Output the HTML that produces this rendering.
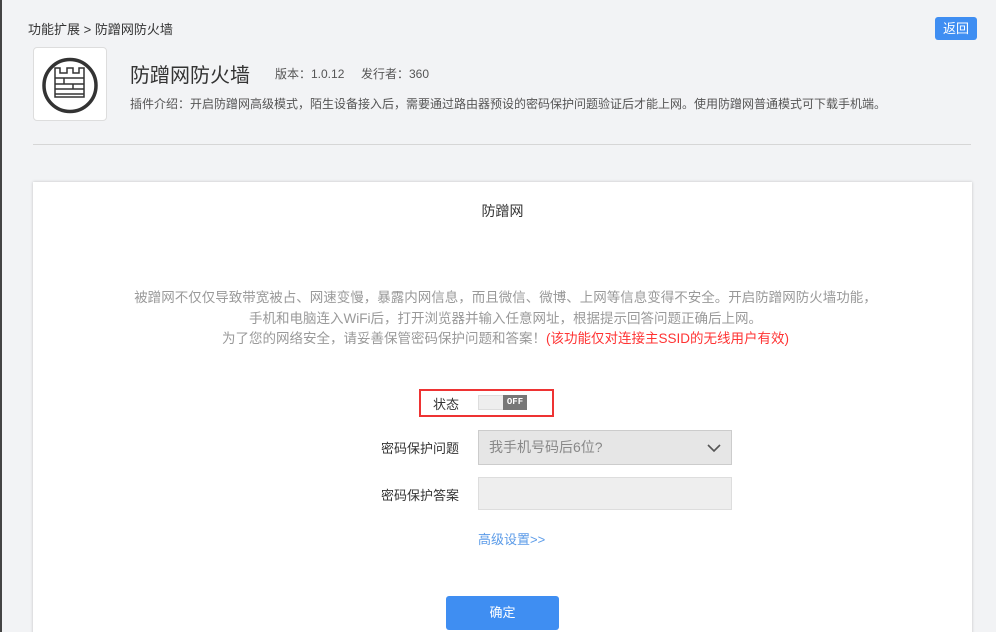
<!DOCTYPE html>
<html><head><meta charset="utf-8"><style>
*{margin:0;padding:0;box-sizing:border-box}
html,body{width:996px;height:632px;overflow:hidden}
body{background:#f2f3f5;font-family:"Liberation Sans","Noto Sans CJK SC",sans-serif;position:relative;color:#333}
.a{position:absolute;white-space:nowrap}
</style></head><body>
<div class="a" style="left:0;top:0;width:2px;height:632px;background:#444"></div>
<div class="a" style="left:28px;top:19px;font-size:13px;color:#333">功能扩展 &gt; 防蹭网防火墙</div>
<div class="a" style="left:935px;top:17px;width:42px;height:23px;background:#3f8ef2;border-radius:3px;color:#fff;font-size:13px;line-height:23px;text-align:center">返回</div>
<div class="a" style="left:33px;top:47px;width:74px;height:74px;background:#fff;border:1px solid #ddd;border-radius:4px">
<svg width="75" height="75" viewBox="0 0 75 75" style="position:absolute;left:-1px;top:-1px"><circle cx="37" cy="38.5" r="26" fill="none" stroke="#333" stroke-width="3.5"/>
<g fill="none" stroke="#333" stroke-width="1.5"><path d="M22 50V21h5v5h7v-5h6v5h6v-5h5v29z M22 31h29 M22 37h29 M22 42h29 M22 47h29 M31 31v6 M40 37v5"/></g></svg></div>
<div class="a" style="left:130px;top:59px;font-size:20px;color:#333">防蹭网防火墙</div>
<div class="a" style="left:275px;top:65px;font-size:12px;color:#555">版本：1.0.12</div>
<div class="a" style="left:361px;top:65px;font-size:12px;color:#555">发行者：360</div>
<div class="a" style="left:130px;top:95px;font-size:12px;color:#555">插件介绍：开启防蹭网高级模式，陌生设备接入后，需要通过路由器预设的密码保护问题验证后才能上网。使用防蹭网普通模式可下载手机端。</div>
<div class="a" style="left:33px;top:144px;width:938px;height:1px;background:#d6d6d6"></div>
<div class="a" style="left:33px;top:182px;width:939px;height:460px;background:#fff;box-shadow:0 0 3px rgba(0,0,0,.2)"></div>
<div class="a" style="left:33px;top:201px;width:939px;text-align:center;font-size:14px;color:#333">防蹭网</div>
<div class="a" style="left:36px;top:288px;width:939px;text-align:center;font-size:13.5px;line-height:20.5px;color:#999">被蹭网不仅仅导致带宽被占、网速变慢，暴露内网信息，而且微信、微博、上网等信息变得不安全。开启防蹭网防火墙功能，<br>手机和电脑连入WiFi后，打开浏览器并输入任意网址，根据提示回答问题正确后上网。<br>为了您的网络安全，请妥善保管密码保护问题和答案！<span style="color:#f33">(该功能仅对连接主SSID的无线用户有效)</span></div>
<div class="a" style="left:419px;top:389px;width:135px;height:28px;border:2px solid #e33"></div>
<div class="a" style="left:300px;top:394px;width:159px;text-align:right;font-size:13px">状态</div>
<div class="a" style="left:478px;top:395px;width:49px;height:15px;background:#eee;border:1px solid #ddd"></div>
<div class="a" style="left:503px;top:395px;width:24px;height:15px;background:#777;color:#fff;font-size:9px;font-family:'Liberation Mono',monospace;line-height:15px;text-align:center;font-weight:bold">OFF</div>
<div class="a" style="left:300px;top:438px;width:159px;text-align:right;font-size:13px">密码保护问题</div>
<div class="a" style="left:478px;top:430px;width:254px;height:35px;background:#e6e6e6;border:1px solid #ccc;font-size:14px;color:#888;line-height:33px;padding-left:10px">我手机号码后6位?
<svg width="14" height="10" style="position:absolute;right:10px;top:12px"><path d="M1 2l6 6 6-6" fill="none" stroke="#555" stroke-width="1.6"/></svg></div>
<div class="a" style="left:300px;top:485px;width:159px;text-align:right;font-size:13px">密码保护答案</div>
<div class="a" style="left:478px;top:477px;width:254px;height:33px;background:#eee;border:1px solid #ddd"></div>
<div class="a" style="left:478px;top:529px;font-size:13px;color:#5b9be8">高级设置&gt;&gt;</div>
<div class="a" style="left:446px;top:596px;width:113px;height:34px;background:#3f8ef2;border-radius:3px;color:#fff;font-size:13px;line-height:34px;text-align:center">确定</div>
</body></html>
